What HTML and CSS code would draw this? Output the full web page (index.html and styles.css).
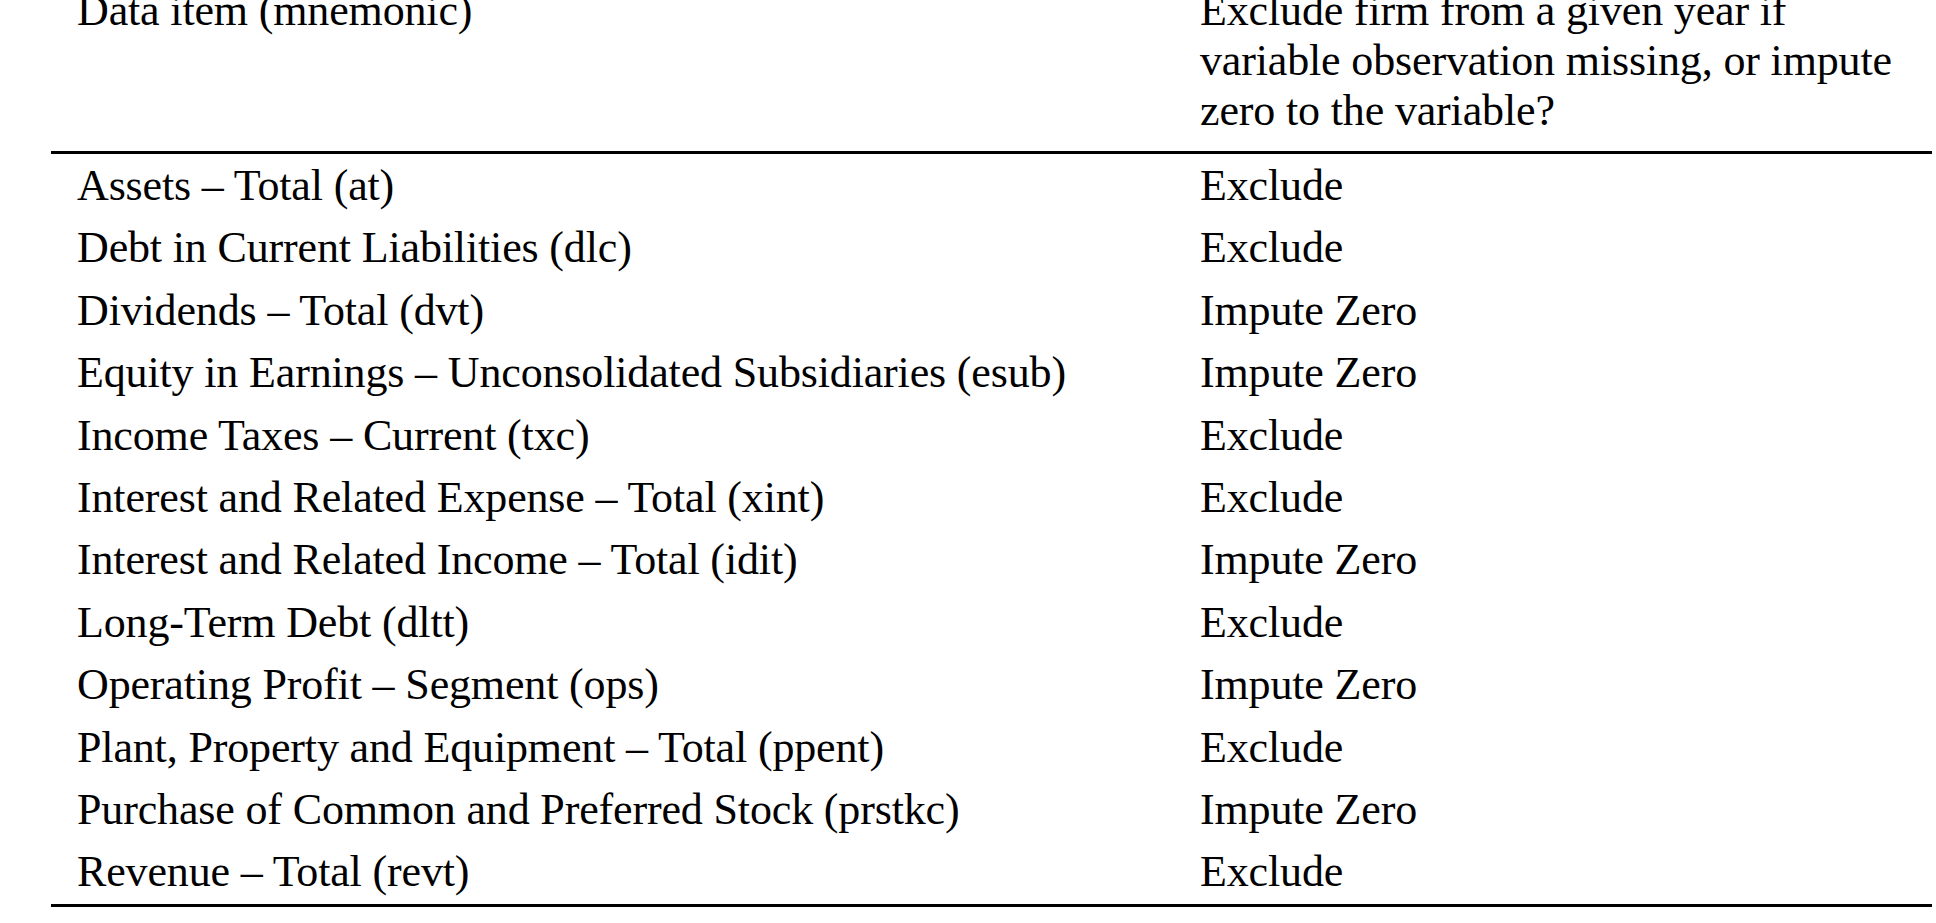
FILE: index.html
```html
<!DOCTYPE html>
<html lang="en">
<head>
<meta charset="utf-8">
<title>Data items</title>
<link rel="stylesheet" href="styles.css">
</head>
<body>
<div class="page">
  <table class="items">
    <thead>
      <tr>
        <th class="c1">Data item (mnemonic)</th>
        <th class="c2">Exclude firm from a given year if<br>variable observation missing, or impute<br>zero to the variable?</th>
      </tr>
    </thead>
    <tbody>
      <tr><td class="c1">Assets – Total (at)</td><td class="c2">Exclude</td></tr>
      <tr><td class="c1">Debt in Current Liabilities (dlc)</td><td class="c2">Exclude</td></tr>
      <tr><td class="c1">Dividends – Total (dvt)</td><td class="c2">Impute Zero</td></tr>
      <tr><td class="c1">Equity in Earnings – Unconsolidated Subsidiaries (esub)</td><td class="c2">Impute Zero</td></tr>
      <tr><td class="c1">Income Taxes – Current (txc)</td><td class="c2">Exclude</td></tr>
      <tr><td class="c1">Interest and Related Expense – Total (xint)</td><td class="c2">Exclude</td></tr>
      <tr><td class="c1">Interest and Related Income – Total (idit)</td><td class="c2">Impute Zero</td></tr>
      <tr><td class="c1">Long-Term Debt (dltt)</td><td class="c2">Exclude</td></tr>
      <tr><td class="c1">Operating Profit – Segment (ops)</td><td class="c2">Impute Zero</td></tr>
      <tr><td class="c1">Plant, Property and Equipment – Total (ppent)</td><td class="c2">Exclude</td></tr>
      <tr><td class="c1">Purchase of Common and Preferred Stock (prstkc)</td><td class="c2">Impute Zero</td></tr>
      <tr><td class="c1">Revenue – Total (revt)</td><td class="c2">Exclude</td></tr>
    </tbody>
  </table>
</div>
</body>
</html>
```

FILE: styles.css
```css
html, body {
  margin: 0;
  padding: 0;
  background: #fff;
  overflow: hidden;
}
.page {
  padding-left: 51px;
  margin-top: -14px;
}
.items {
  border-collapse: collapse;
  width: 1881px;
  font-family: "Liberation Serif", "Times New Roman", serif;
  font-size: 44px;
  letter-spacing: -0.15px;
  color: #000;
}
.items th,
.items td {
  padding: 0;
  text-align: left;
  vertical-align: top;
  font-weight: normal;
}
.items .c1 {
  width: 1123px;
  padding-left: 26px;
}
.items thead th {
  line-height: 50px;
  padding-bottom: 15px;
  border-bottom: 3px solid #000;
}
.items tbody td {
  line-height: 62.4px;
  height: 62.4px;
}
.items tbody tr:first-child td {
  padding-top: 1px;
}
.items tbody tr:last-child td {
  border-bottom: 3px solid #000;
}
```
